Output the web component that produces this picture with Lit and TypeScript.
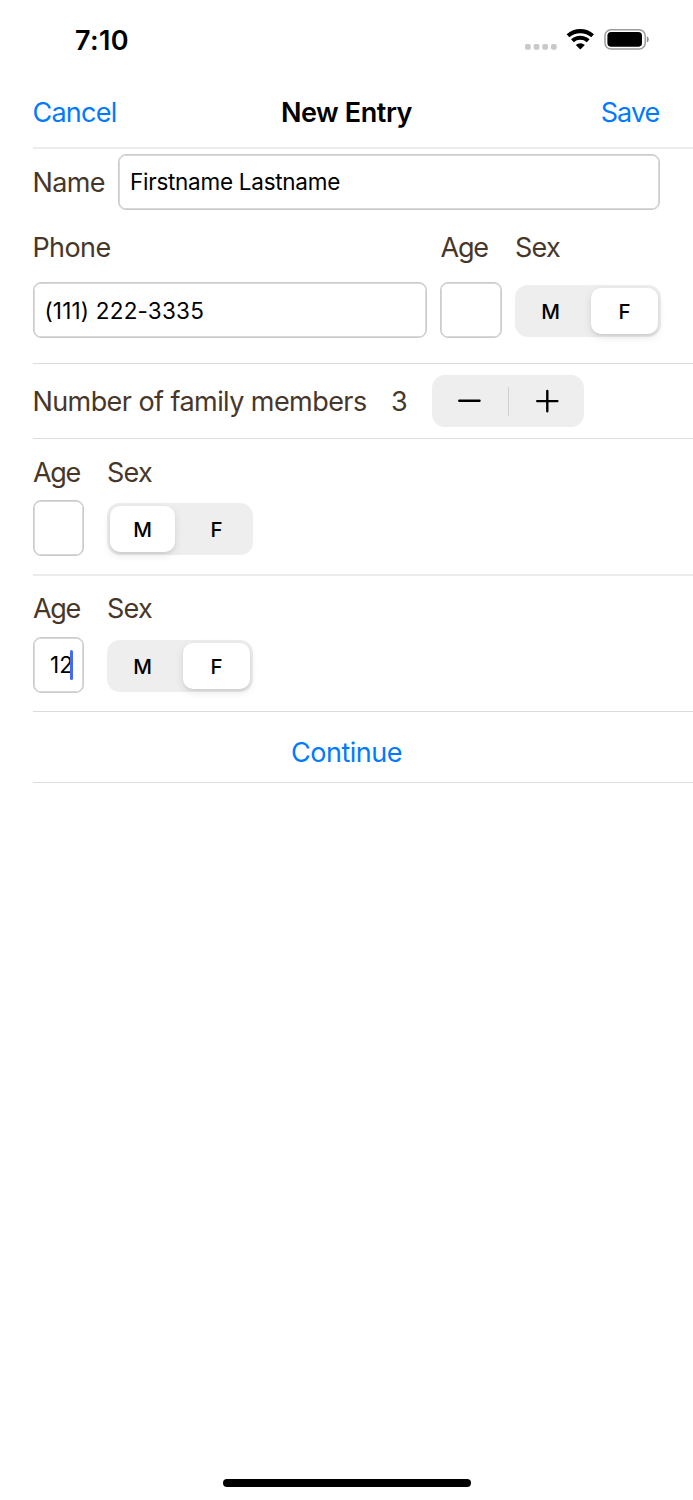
import { LitElement, html, css } from "lit";
import { customElement, property, state } from "lit/decorators.js";

type Sex = "M" | "F";

@customElement("status-bar")
class StatusBar extends LitElement {
  static styles = css`
    :host { display: block; }
    .bar { display: flex; justify-content: space-between; align-items: flex-start; box-sizing: border-box; height: 80px; padding: 25px 43px 0 75px; }
    .time { font-size: 27px; line-height: 32px; font-weight: 600; letter-spacing: 0.4px; }
    .icons { display: block; margin-top: 1px; }
  `;
  render() {
    return html`<div class="bar">
      <span class="time">7:10</span>
      <svg class="icons" width="130" height="26" viewBox="0 0 130 26">
        <g fill="#c9c9c9">
          <rect x="5" y="18" width="5.7" height="5.7" rx="1.6" />
          <rect x="13.7" y="18" width="5.7" height="5.7" rx="1.6" />
          <rect x="22.3" y="18" width="5.7" height="5.7" rx="1.6" />
          <rect x="31" y="18" width="5.7" height="5.7" rx="1.6" />
        </g>
        <g fill="none" stroke="#000" stroke-width="4.1">
          <path d="M48 9.8A18.6 18.6 0 0 1 72.6 9.8" />
          <path d="M52.4 14.8A11.9 11.9 0 0 1 68.2 14.8" />
        </g>
        <path d="M60.3 23.5L55.8 18.9A6.6 6.6 0 0 1 64.8 18.9Z" />
        <rect x="85" y="3.7" width="40.2" height="19.3" rx="6" fill="none" stroke="#9b9b9b" stroke-width="1.5" />
        <rect x="87.4" y="6" width="34.6" height="14.8" rx="3.8" />
        <path d="M126.8 10.2C129.4 11 129.4 15.6 126.8 16.4Z" fill="#8e8e8e" />
      </svg>
    </div>`;
  }
}

@customElement("text-box")
class TextBox extends LitElement {
  @property() value = "";
  @property() kind = "text";
  @property({ type: Boolean }) active = false;
  static styles = css`
    :host { display: block; }
    .box { display: flex; align-items: center; box-sizing: border-box; height: 56px; padding-left: 11px; border: 1px solid #cbcbcf; border-radius: 8px; box-shadow: inset 0 0 0 0.7px #cbcbcf; background: #fff; font-size: 22.5px; line-height: 28px; color: #000; white-space: nowrap; }
    .text { letter-spacing: -0.27px; }
    .phone { padding-left: 10.4px; letter-spacing: 0.2px; }
    .phone .value { padding-top: 2px; }
    .number { padding-left: 16px; letter-spacing: 0; }
    .caret { width: 3px; height: 30px; margin-left: -3px; border-radius: 1.5px; background: #4169f5; z-index: 1; }
  `;
  render() {
    return html`<div class="box ${this.kind}">
      <span class="value">${this.value}</span>${this.active ? html`<span class="caret"></span>` : ""}
    </div>`;
  }
}

@customElement("sex-picker")
class SexPicker extends LitElement {
  @property() value: Sex = "M";
  static styles = css`
    :host { display: block; }
    .track { display: grid; grid-template-columns: 65px 67px; gap: 8px; box-sizing: border-box; width: 145.5px; height: 52px; padding: 3px; border-radius: 13px; background: #eeeeee; }
    .seg { display: flex; align-items: center; justify-content: center; box-sizing: border-box; padding-top: 2px; border-radius: 10px; font-size: 20.5px; line-height: 26px; font-weight: 500; color: #000; }
    .on { background: #fff; box-shadow: 0 3px 8px rgba(0, 0, 0, 0.11), 0 2px 2px rgba(0, 0, 0, 0.05); }
  `;
  render() {
    return html`<div class="track">
      ${(["M", "F"] as Sex[]).map(
        (s) => html`<div class="seg ${s === this.value ? "on" : ""}" @click=${() => (this.value = s)}>${s}</div>`
      )}
    </div>`;
  }
}

@customElement("count-stepper")
class CountStepper extends LitElement {
  static styles = css`
    :host { display: block; }
    .stepper { display: flex; align-items: center; width: 152px; height: 52px; border-radius: 13px; background: #eeeeee; }
    .half { display: flex; flex: 1; }
    .rule { width: 1px; height: 29px; background: #d0d0d1; }
    .glyph { fill: none; stroke: #000; stroke-width: 2.4; stroke-linecap: round; }
  `;
  render() {
    return html`<div class="stepper">
      <div class="half"><svg class="glyph" width="75" height="52"><path d="M27.3 25.7H47.5" /></svg></div>
      <div class="rule"></div>
      <div class="half"><svg class="glyph" width="75" height="52"><path d="M28.2 26.1H48.4M38.3 16V36.2" /></svg></div>
    </div>`;
  }
}

@customElement("app-root")
class AppRoot extends LitElement {
  @state() members: { age: string; sex: Sex; editing: boolean }[] = [
    { age: "", sex: "M", editing: false },
    { age: "12", sex: "F", editing: true },
  ];

  static styles = css`
    :host { display: flex; flex-direction: column; height: 1500px; overflow: hidden; background: #fff; color: #000; font-family: Inter, "Liberation Sans", sans-serif; font-size: 27px; line-height: 32px; }
    .nav { display: grid; grid-template-columns: 1fr auto 1fr; margin-left: 33px; padding: 17px 33px 18px 0; border-bottom: 2px solid #ececed; }
    .link { color: #007aff; }
    .cancel { margin-left: -0.6px; letter-spacing: -0.72px; }
    .title { font-weight: 600; letter-spacing: -0.42px; }
    .save { margin-right: 0.6px; letter-spacing: -0.95px; text-align: right; }
    .label { display: block; margin-left: -0.6px; color: #47372a; letter-spacing: -0.57px; white-space: nowrap; }
    .age { margin-left: 0; letter-spacing: -1.3px; }
    .sex { margin-left: 0; letter-spacing: -0.7px; }
    .person { margin-left: 33px; padding: 5px 33px 25px 0; border-bottom: 1px solid #dcdcdd; }
    .name { display: grid; grid-template-columns: 85px 1fr; align-items: center; }
    .name .label, .count .label { padding-top: 2px; }
    .details { display: grid; grid-template-columns: 394px 62px 146px; column-gap: 13px; row-gap: 18px; margin-top: 22px; }
    .details .age { margin-left: 0.6px; }
    .picker { padding-top: 3px; }
    .count { display: flex; align-items: center; height: 74px; margin-left: 33px; border-bottom: 1px solid #dcdcdd; }
    .caption { width: 334px; }
    .total { margin-left: 24.6px; width: 41px; }
    .member { display: grid; grid-template-columns: 51px 146px; column-gap: 23px; row-gap: 11px; margin-left: 33px; padding: 18px 0 18px; border-bottom: 2px solid #ececed; }
    .member + .member { row-gap: 12px; padding-top: 17px; border-bottom: 1px solid #dcdcdd; }
    .continue { height: 45px; margin-left: 33px; padding: 25px 33px 0 0; border-bottom: 1px solid #dcdcdd; text-align: center; letter-spacing: -0.5px; }
    .home { width: 248px; height: 8px; margin: auto auto 13px; border-radius: 4px; background: #000; }
  `;

  render() {
    return html`
      <status-bar></status-bar>
      <div class="nav">
        <span class="link cancel">Cancel</span>
        <span class="title">New Entry</span>
        <span class="link save">Save</span>
      </div>
      <div class="person">
        <div class="name">
          <span class="label">Name</span>
          <text-box value="Firstname Lastname"></text-box>
        </div>
        <div class="details">
          <span class="label">Phone</span>
          <span class="label age">Age</span>
          <span class="label sex">Sex</span>
          <text-box kind="phone" value="(111) 222-3335"></text-box>
          <text-box kind="number"></text-box>
          <sex-picker class="picker" value="F"></sex-picker>
        </div>
      </div>
      <div class="count">
        <span class="label caption">Number of family members</span>
        <span class="label total">${this.members.length + 1}</span>
        <count-stepper></count-stepper>
      </div>
      ${this.members.map(
        (m) => html`<div class="member">
          <span class="label age">Age</span>
          <span class="label sex">Sex</span>
          <text-box kind="number" .value=${m.age} ?active=${m.editing}></text-box>
          <sex-picker class="picker" .value=${m.sex}></sex-picker>
        </div>`
      )}
      <div class="continue link">Continue</div>
      <div class="home"></div>
    `;
  }
}
